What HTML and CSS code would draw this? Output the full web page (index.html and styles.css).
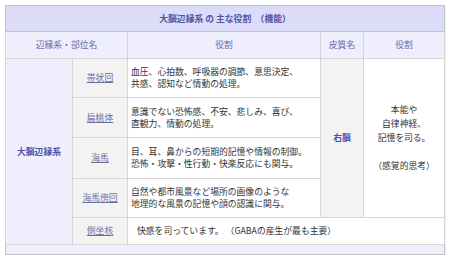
FILE: index.html
```
<!DOCTYPE html>
<html lang="ja">
<head>
<meta charset="utf-8">
<link rel="stylesheet" href="styles.css">
</head>
<body>
<table class="tbl">
  <colgroup>
    <col class="c1"><col class="c2"><col class="c3"><col class="c4"><col class="c5">
  </colgroup>
  <tr class="title-row"><th colspan="5">大脳辺縁系 の 主な役割　（機能）</th></tr>
  <tr class="head-row">
    <th colspan="2">辺縁系・部位名</th>
    <th>役割</th>
    <th>皮質名</th>
    <th>役割</th>
  </tr>
  <tr class="r1">
    <td rowspan="5" class="main">大脳辺縁系</td>
    <td class="sub"><a href="#">帯状回</a></td>
    <td class="desc">血圧、心拍数、呼吸器の調節、意思決定、<br>共感、認知など情動の処理。</td>
    <td rowspan="4" class="cortex">右脳</td>
    <td rowspan="4" class="role">本能や<br>自律神経、<br>記憶を司る。<br><br>（感覚的思考）</td>
  </tr>
  <tr class="r2">
    <td class="sub"><a href="#">扁桃体</a></td>
    <td class="desc">意識でない恐怖感、不安、悲しみ、喜び、<br>直観力、情動の処理。</td>
  </tr>
  <tr class="r3">
    <td class="sub"><a href="#">海馬</a></td>
    <td class="desc">目、耳、鼻からの短期的記憶や情報の制御。<br>恐怖・攻撃・性行動・快楽反応にも関与。</td>
  </tr>
  <tr class="r4">
    <td class="sub"><a href="#">海馬傍回</a></td>
    <td class="desc">自然や都市風景など場所の画像のような<br>地理的な風景の記憶や顔の認識に関与。</td>
  </tr>
  <tr class="r5">
    <td class="sub"><a href="#">側坐核</a></td>
    <td colspan="3" class="desc wide">快感を司っています。 （GABAの産生が最も主要）</td>
  </tr>
  <tr class="foot-row"><td colspan="5"></td></tr>
</table>
</body>
</html>
```
FILE: styles.css
```
html, body {
  margin: 0;
  padding: 0;
  background: #ffffff;
}
body {
  padding: 5px 0 0 5px;
  font-family: "Noto Sans CJK JP", "Noto Sans", sans-serif;
  font-size: 8.8px;
  color: #333333;
}
.tbl {
  border-collapse: collapse;
  table-layout: fixed;
  width: 439px;
  border: 1px solid #c4c4c4;
  box-shadow: 1px 1px 1px rgba(0,0,0,0.06);
}
.c1 { width: 67px; }
.c2 { width: 55px; }
.c3 { width: 193px; }
.c4 { width: 43px; }
.c5 { width: 81px; }
th, td {
  border: 1px solid #d6d6d6;
  padding: 0;
  line-height: 12px;
  vertical-align: middle;
}
.title-row th {
  height: 25px;
  background: #dcdcf9;
  color: #5252a2;
  font-weight: bold;
  text-align: center;
  border-color: #c4c4c4;
}
.head-row th {
  height: 26px;
  background: #eeeefc;
  color: #6a6aa6;
  font-weight: normal;
  text-align: center;
}
.main {
  background: #eeeefc;
  color: #5050aa;
  font-weight: bold;
  text-align: center;
}
.sub {
  background: #f3f3f3;
  text-align: center;
}
.sub a {
  color: #6e6e9c;
  text-decoration: underline;
}
.desc {
  padding-left: 3px;
  text-align: left;
  background: #ffffff;
}
.desc.wide {
  padding-left: 9px;
}
.cortex {
  background: #f3f3f3;
  color: #5050aa;
  font-weight: bold;
  text-align: center;
}
.role {
  background: #ffffff;
  text-align: center;
  line-height: 14px;
}
.r1 td { height: 38px; }
.r2 td { height: 39px; }
.r3 td { height: 40px; }
.r4 td { height: 38px; }
.r5 td { height: 26px; }
.foot-row td {
  height: 9px;
  background: #eeeefc;
  border-color: #c4c4c4;
}
```
